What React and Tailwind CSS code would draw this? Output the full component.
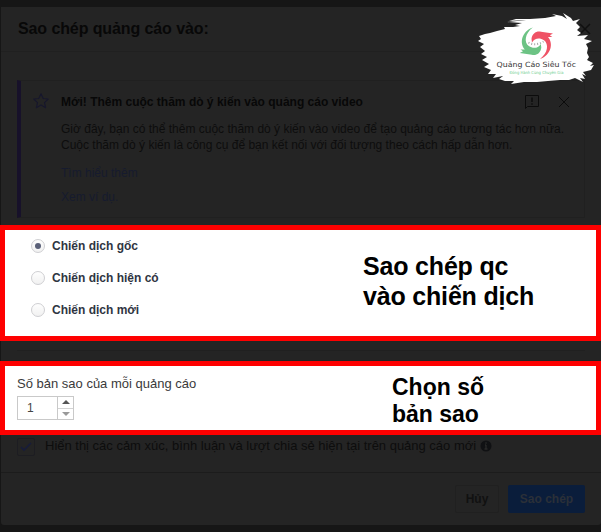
import React from "react";

const Star = () => (
  <svg width="18" height="18" viewBox="0 0 18 18" fill="none" stroke="#17172c" strokeWidth="1.2" strokeLinejoin="round">
    <path d="M9 1.8 11.2 6.5 16.2 7 12.5 10.6 13.6 15.7 9 13.1 4.4 15.7 5.5 10.6 1.8 7 6.8 6.5Z" />
  </svg>
);

const Feedback = () => (
  <svg width="16" height="16" viewBox="0 0 16 16" fill="none" stroke="#0c0c0c" strokeWidth="1">
    <path d="M1.5 14.5V1.5h13v11h-11Z" />
    <path d="M8 3.5v4.5M8 9.3v1.5" strokeWidth="1.4" />
  </svg>
);

const SWIRL = "M531.5 39C532 33 537 30.5 541 31.7L553 33.5 549.8 35.2 552.3 37 548 37C553.5 43 551.5 55 540 59C548 53 549 44 544 40.3C539.5 37.3 534.5 38.3 532 42.5Z";

const Logo = () => (
  <svg className="absolute left-[474px] top-[8px]" width="127" height="80" viewBox="474 8 127 80">
    <path
      fill="#fff"
      d="M478 41 481 39 479 36 485 34 490 33 497 31 505 29 504 27 513 27 520 26 515 25 522 23 507 22 526 20 509 21 516 19 530 19 545 18 556 16 552 14 562 16 567 19 563 13 571 18 573 21 580 19 576 23 580 27 577 30 581 33 577 36 588 35 584 39 592 41 586 44 588 48 587 53 589 57 587 60 593 63 590 66 594 65 591 70 583 72 586 76 582 74 585 79 580 78 583 82 575 78 569 80 560 80 548 81 537 82 524 82 511 84 514 81 505 81 499 79 503 76 493 78 496 74 488 74 491 70 484 67 489 64 482 60 487 57 481 54 485 51 480 47 484 44Z"
    />
    <path fill="#ef5265" d={SWIRL} />
    <path fill="#6cc384" d={SWIRL} transform="rotate(180 536.4 43.2)" />
    <path fill="none" stroke="#aaa" strokeDasharray="1 2" strokeWidth="2" d="M528.5 42.5Q535 46.5 543.5 41.5" />
    <text x="496.5" y="66.5" textLength="79.5" lengthAdjust="spacingAndGlyphs" fontFamily="DejaVu Sans" fontSize="7.2" fill="#333">Quảng Cáo Siêu Tốc</text>
    <text x="509.5" y="74.3" textLength="54" lengthAdjust="spacingAndGlyphs" fontFamily="DejaVu Sans" fontSize="4.2" fill="#6fce91">Đồng Hành Cùng Chuyên Gia</text>
  </svg>
);

const Radio = ({ label, checked }) => (
  <label className="flex h-8 items-center">
    <span className="mr-[7px] flex size-[14px] items-center justify-center rounded-full border border-[#cfcfd2] bg-gradient-to-b from-[#fefefe] to-[#f1f1f1]">
      {checked && <span className="size-[6px] rounded-full bg-[#5a6078]" />}
    </span>
    <span className="text-[12px] font-bold leading-4 text-[#2f3542]">{label}</span>
  </label>
);

export default function App() {
  return (
    <div className="relative flex h-[532px] w-[601px] flex-col overflow-hidden whitespace-nowrap bg-[#161616] pt-[7px] font-['Liberation_Sans',Arial,sans-serif]">
      <header className="ml-[1px] flex h-[45px] items-center border-b border-[#202020] bg-[#242424] pl-[17px]">
        <h1 className="text-[16px] font-bold leading-5 tracking-[-0.1px] text-[#080808]">Sao chép quảng cáo vào:</h1>
        <svg className="ml-auto mr-[10px]" width="12" height="12" viewBox="0 0 12 12" stroke="#101010" strokeWidth="1.5"><path d="m1 1 10 10M11 1 1 11" /></svg>
      </header>

      <section className="ml-[1px] h-[173px] bg-[#242424] pl-4 pt-7">
        <div className="flex h-[138px] w-[568px] border border-l-4 border-[#202020] border-l-[#17112a] pl-[11px] pt-[11px]">
          <Star />
          <div className="ml-[11px] flex-1">
            <div className="flex h-[19px] items-center">
              <h2 className="text-[12px] font-bold leading-4 text-[#080808]">Mới! Thêm cuộc thăm dò ý kiến vào quảng cáo video</h2>
              <div className="ml-auto flex items-center gap-[18px] pr-[14px]">
                <Feedback />
                <svg width="12" height="12" viewBox="0 0 12 12" stroke="#0b0b0b"><path d="m1 1 10 10M11 1 1 11" /></svg>
              </div>
            </div>
            <p className="mt-[10px] text-[12px] leading-[16px] text-[#0d0d0d]">
              Giờ đây, bạn có thể thêm cuộc thăm dò ý kiến vào video để tạo quảng cáo tương tác hơn nữa.<br />
              Cuộc thăm dò ý kiến là công cụ để bạn kết nối với đối tượng theo cách hấp dẫn hơn.
            </p>
            <p className="mt-[12px] text-[12px] leading-4 text-[#161b2e]">Tìm hiểu thêm</p>
            <p className="mt-2 text-[12px] leading-4 text-[#161b2e]">Xem ví dụ.</p>
          </div>
        </div>
      </section>

      <section className="flex h-[116px] border-[5px] border-[#fe0000] bg-white">
        <div className="w-[358px] pl-[26px]">
          <Radio label="Chiến dịch gốc" checked />
          <Radio label="Chiến dịch hiện có" />
          <Radio label="Chiến dịch mới" />
        </div>
        <p className="pt-[21px] text-[25px] font-bold leading-[30px] tracking-[-0.18px] text-black">Sao chép qc<br />vào chiến dịch</p>
      </section>

      <div className="ml-[1px] h-[20px] bg-[#242424] pt-[9px]">
        <div className="ml-4 w-[568px] border-t border-[#202020]" />
      </div>

      <section className="flex h-[74px] border-[5px] border-[#fe0000] bg-white">
        <div className="w-[387px] pl-3 pt-[10px]">
          <p className="text-[13px] leading-4 text-[#3a3a3a]">Số bản sao của mỗi quảng cáo</p>
          <div className="mt-1 flex h-6 w-[57px] border border-[#c9c9c9]">
            <span className="w-[40px] border-r border-[#c9c9c9] pl-[9px] text-[12px] leading-[22px] text-[#444]">1</span>
            <span className="flex flex-1 flex-col">
              <span className="flex flex-1 items-center justify-center border-b border-[#d3d3d3]"><svg width="8" height="4"><path d="M0 4 4 0l4 4Z" fill="#555" /></svg></span>
              <span className="flex flex-1 items-center justify-center"><svg width="8" height="4"><path d="m0 0 4 4 4-4Z" fill="#999" /></svg></span>
            </span>
          </div>
        </div>
        <p className="pt-[8px] text-[23px] font-bold leading-[27px] text-black">Chọn số<br />bản sao</p>
      </section>

      <section className="ml-[1px] flex h-[37px] items-start bg-[#242424] pl-4 pt-[3px]">
        <span className="flex size-[18px] items-center justify-center rounded-[2px] border border-[#1d1d22]">
          <svg width="12" height="10" viewBox="0 0 12 10" fill="none" stroke="#171c3a" strokeWidth="1.7"><path d="m1 5 3 3 7-7" /></svg>
        </span>
        <span className="ml-[10px] text-[13px] leading-4 tracking-[-0.01px] text-[#0d0d0d]">Hiển thị các cảm xúc, bình luận và lượt chia sẻ hiện tại trên quảng cáo mới</span>
        <svg className="ml-1 mt-[2px]" width="12" height="12" viewBox="0 0 12 12"><circle cx="6" cy="6" r="5.5" fill="#101113" /><path d="M6 5v4M5 5h1M4.5 9h3M6 2.3v1.4" stroke="#292929" strokeWidth="1.4" /></svg>
      </section>

      <footer className="ml-[1px] flex h-[53px] items-start justify-end rounded-b-[3px] border-t border-[#1c1c1c] bg-[#242424] pr-4 pt-[12px]">
        <button className="mr-[9px] h-7 w-[44px] rounded-[2px] border border-[#202020] text-[12px] font-bold text-[#111]">Hủy</button>
        <button className="h-7 w-[77px] rounded-[2px] bg-[#0a1d3b] text-[12px] font-bold text-[#2b3038]">Sao chép</button>
      </footer>
      <Logo />
    </div>
  );
}
